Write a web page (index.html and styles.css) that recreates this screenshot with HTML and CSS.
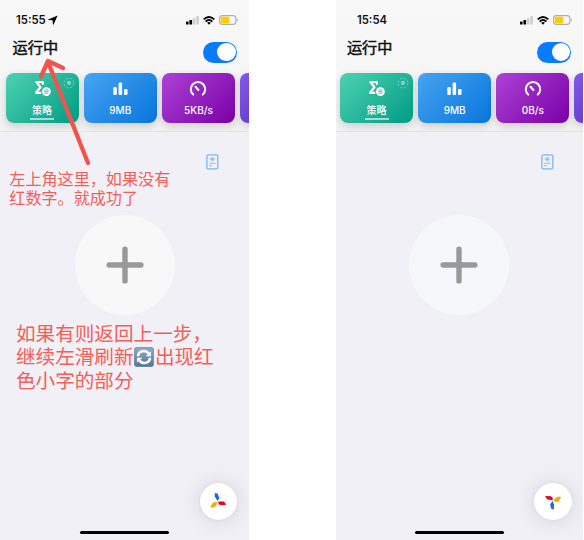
FILE: index.html
```
<!DOCTYPE html>
<html lang="zh-CN">
<head>
<meta charset="utf-8">
<title>运行中</title>
<link rel="stylesheet" href="styles.css">
</head>
<body>
<svg class="defs" width="0" height="0" aria-hidden="true">
  <symbol id="signal" viewBox="0 0 13 9"><rect x="0" y="5.6" width="2.6" height="2.9" rx=".6"/><rect x="3.4" y="4" width="2.7" height="4.5" rx=".6"/><g fill="#cdcdcd"><rect x="7" y="2" width="2.4" height="6.5" rx=".6"/><rect x="10.4" y="0" width="2.5" height="8.5" rx=".6"/></g></symbol>
  <symbol id="wifi" viewBox="0 0 12 9"><g fill="none" stroke="#000" stroke-width="1.8"><path d="M.7 3.4Q6-1.4 11.3 3.4"/><path d="M2.6 5.6Q6 2.4 9.4 5.6"/></g><path d="M4.1 6.8Q6 5.3 7.9 6.8L6 8.8Z"/></symbol>
  <symbol id="battery" viewBox="0 0 19 10"><rect x=".6" y=".6" width="16.2" height="8.8" rx="2.6" fill="none" stroke="#b0b0b0" stroke-width="1.1"/><rect x="1.7" y="1.7" width="8.7" height="6.6" rx="1.3" fill="#fc0"/><path d="M17.7 3.3q1.2.4 1.2 1.7t-1.2 1.7z" fill="#b0b0b0"/></symbol>
  <symbol id="sigma" viewBox="0 0 17 17"><path d="M8.8 3.8V2H2.4L6.4 7.2 2 12.8H6.4" fill="none" stroke="#fff" stroke-width="2.2" stroke-linejoin="round" stroke-linecap="round"/><circle cx="12.4" cy="11.6" r="4.4" fill="#fff"/><path d="M10.3 10h4.2M10.3 11.6h4.2M10.3 13.2h4.2" stroke="#28b798" stroke-width=".8"/></symbol>
  <symbol id="bars" viewBox="0 0 15 14"><g fill="#fff"><rect x=".3" y="5" width="3.5" height="8" rx="1.3"/><rect x="5.6" y=".5" width="3.5" height="12.5" rx="1.3"/><rect x="11" y="7" width="3.5" height="6" rx="1.3"/></g></symbol>
  <symbol id="gauge" viewBox="0 0 18 16"><path d="M4.2 13.6A7.2 7.2 0 1 1 13.8 13.6" fill="none" stroke="#fff" stroke-width="2" stroke-linecap="round"/><path d="M6.5 5.8L9.4 9" stroke="#fff" stroke-width="2.1" stroke-linecap="round"/></symbol>
  <symbol id="target" viewBox="0 0 12 12"><g fill="none" stroke="#fff"><circle cx="6" cy="6" r="4.9" stroke-width=".8" stroke-dasharray="2.4 1.45"/><circle cx="6" cy="6" r="1.2" stroke-width="1.9"/></g></symbol>
  <symbol id="doc" viewBox="0 0 13 16"><g fill="none" stroke="#7ab7f6"><rect x=".9" y=".9" width="10.9" height="14" rx="1.5" stroke-width="1.3"/><path d="M3.6 5.2h5.5M6.3 3v4.3M4.8 3.8l3 2.8M7.8 3.8l-3 2.8" stroke-width=".8"/><path d="M3.2 9.3h6.4M3.2 11.6h3" stroke-width=".9"/></g></symbol>
  <symbol id="plus" viewBox="0 0 38 38"><path d="M3.1 19h31.8M19 3.1v31.8" stroke="#999" stroke-width="5.4" stroke-linecap="round"/></symbol>
  <symbol id="fan" viewBox="0 0 18 18"><path d="M8.4 9.1L5.7 4.2 5.9.9 8.6 1.6 10.4 6.3Z" fill="#136ce8"/><path d="M9.2 9.6L15 9.4 17.4 12.8 12.1 13.3 9.6 12.2Z" fill="#e00828"/><path d="M8.5 9.7L7.2 13.3 5 15.6 1.2 15.2 4 10.6Z" fill="#f3a90e"/></symbol>
  <symbol id="fan-turned" viewBox="0 0 18 18"><path d="M8.8 8.3L3.4 7.5.8 4.2 6.2 4.1 8.6 5.6Z" fill="#e00828"/><path d="M9.4 8.4L11.5 5.9 14.4 4.5 17.1 5 15.2 8.7 12.1 10.4Z" fill="#f3a90e"/><path d="M8.6 8.9L10.1 12.8 9.7 17.8 7 16.6 6.2 12.2Z" fill="#136ce8"/></symbol>
</svg>
<main class="board">
  <section class="phone">
    <div class="screen">
      <header class="top">
        <div class="status">
          <span class="time">15:55</span>
          <svg class="location" viewBox="0 0 10 10"><path d="M9.6.4L.3 4.4q-.4.4.3.6l4 .3.3 4q.2.8.7.2Z"/></svg>
          <div class="system"><svg class="signal"><use href="#signal"/></svg><svg class="wifi"><use href="#wifi"/></svg><svg class="battery"><use href="#battery"/></svg></div>
        </div>
        <div class="heading"><h1>运行中</h1><span class="toggle"></span></div>
        <div class="cards">
          <div class="card green"><svg class="target"><use href="#target"/></svg><svg class="icon"><use href="#sigma"/></svg><span class="label selected">策略</span></div>
          <div class="card blue"><svg class="icon bars"><use href="#bars"/></svg><span class="label">9MB</span></div>
          <div class="card purple"><svg class="icon gauge"><use href="#gauge"/></svg><span class="label">5KB/s</span></div>
          <div class="card violet"></div>
        </div>
      </header>
      <div class="content">
        <svg class="doc"><use href="#doc"/></svg>
        <div class="add"><svg><use href="#plus"/></svg></div>
        <div class="fab"><svg><use href="#fan"/></svg></div>
        <div class="home"></div>
      </div>
      <svg class="arrow" viewBox="0 0 249 180"><path d="M88 163L48 62M41 76.5L48 61L63 68" fill="none" stroke="#f0544f" stroke-width="4.3" stroke-linecap="round" stroke-linejoin="round"/></svg>
      <p class="note first">左上角这里，如果没有<br>红数字。就成功了</p>
      <p class="note second">如果有则返回上一步，<br>继续左滑刷新<svg class="refresh" viewBox="0 0 20 20"><defs><linearGradient id="tile" x2="0" y2="1"><stop stop-color="#91adc3"/><stop offset="1" stop-color="#527696"/></linearGradient></defs><rect x=".3" y=".3" width="19.4" height="19.4" rx="3" fill="url(#tile)" stroke="#557993" stroke-width=".6"/><g fill="none" stroke="#fff" stroke-width="2.5"><path d="M4 9.3C4.2 3.6 11.8 2.3 14.5 6.5"/><path d="M16 10.7C15.8 16.4 8.2 17.7 5.5 13.5"/></g><path d="M17 4.3V9.2H11.6ZM3 15.7V10.8H8.4Z" fill="#fff"/></svg>出现红<br>色小字的部分</p>
    </div>
  </section>
  <section class="phone later">
    <div class="screen">
      <header class="top">
        <div class="status">
          <span class="time">15:54</span>
          <div class="system"><svg class="signal"><use href="#signal"/></svg><svg class="wifi"><use href="#wifi"/></svg><svg class="battery"><use href="#battery"/></svg></div>
        </div>
        <div class="heading"><h1>运行中</h1><span class="toggle"></span></div>
        <div class="cards">
          <div class="card green"><svg class="target"><use href="#target"/></svg><svg class="icon"><use href="#sigma"/></svg><span class="label selected">策略</span></div>
          <div class="card blue"><svg class="icon bars"><use href="#bars"/></svg><span class="label">9MB</span></div>
          <div class="card purple"><svg class="icon gauge"><use href="#gauge"/></svg><span class="label">0B/s</span></div>
          <div class="card violet"></div>
        </div>
      </header>
      <div class="content">
        <svg class="doc"><use href="#doc"/></svg>
        <div class="add"><svg><use href="#plus"/></svg></div>
        <div class="fab"><svg><use href="#fan-turned"/></svg></div>
        <div class="home"></div>
      </div>
    </div>
  </section>
</main>
</body>
</html>
```
FILE: styles.css
```
* { box-sizing: border-box; }
body { margin: 0; background: #fff; color: #111; font-family: Inter, "Noto Sans CJK SC", sans-serif; overflow: hidden; }
.defs { position: absolute; }
svg { display: block; flex: none; }
.board { display: grid; grid-template-columns: 249px 247px; column-gap: 87px; height: 540px; }
.phone { overflow: hidden; background: #f1f0f6; }
.screen { position: relative; display: flex; flex-direction: column; width: 249px; height: 540px; }
.later .screen { margin-left: -1.6px; }
.top { height: 132px; background: linear-gradient(#f8f8f8, #f6f6f6 65%, #f2f2f3); border-bottom: 1px solid #e2e2e7; overflow: hidden; }
.status { display: flex; align-items: center; height: 20px; margin-top: 10px; padding: 0 11.5px 0 16px; }
.time { font-size: 11.3px; font-weight: 600; line-height: 20px; }
.later .time { margin-left: 6.5px; }
.location { width: 10px; height: 10px; margin-left: 2.3px; }
.system { display: flex; align-items: center; margin-left: auto; }
.signal { width: 13px; height: 9px; }
.wifi { width: 12px; height: 9px; margin-left: 4px; }
.battery { width: 19px; height: 10px; margin-left: 3.5px; }
.heading { display: flex; justify-content: space-between; height: 43px; padding: 5px 12px 0 12.5px; }
h1 { margin: 0; font-size: 15.2px; font-weight: 400; line-height: 25px; -webkit-text-stroke: .5px #111; }
.toggle { width: 34px; height: 21px; margin-top: 6.5px; padding: 1.2px; border-radius: 11px; background: #087cff; display: flex; justify-content: flex-end; }
.toggle::after { content: ""; width: 18.4px; height: 18.4px; border-radius: 50%; background: #fff; }
.cards { display: flex; gap: 5px; padding-left: 5.5px; }
.card { position: relative; flex: none; display: flex; flex-direction: column; align-items: center; justify-content: space-between; width: 73.2px; height: 49.5px; padding: 7px 0 3px; border-radius: 8px; box-shadow: 0 3px 9px rgba(0,0,0,.16); color: #fff; }
.green { background: linear-gradient(135deg, #4dd2b1, #019b85); }
.blue { background: linear-gradient(135deg, #46a4f2, #0875dc); }
.purple { background: linear-gradient(135deg, #ad42d6, #7900a5); }
.violet { background: linear-gradient(135deg, #8059eb, #4f24b5); }
.icon { width: 17px; height: 17px; }
.bars { width: 15px; height: 14px; margin-top: 2px; }
.gauge { width: 18px; height: 16px; margin-top: .5px; }
.label { font-size: 10px; font-weight: 500; line-height: 15.5px; height: 16.5px; }
.selected { width: 24px; text-align: center; border-bottom: 1.6px solid rgba(255,255,255,.7); border-bottom-width: 2px; border-bottom-color: rgba(255,255,255,.6); white-space: nowrap; }
.target { position: absolute; top: 3.5px; right: 4px; width: 12px; height: 12px; opacity: .45; }
.content { display: flex; flex: 1; flex-direction: column; background: linear-gradient(#f1f1f4, #f1f0f6 15px); }
.doc { width: 13px; height: 16px; margin: 22px 0 0 206.3px; }
.add { display: grid; place-items: center; width: 100px; height: 100px; margin: 44.5px 0 0 74.8px; border-radius: 50%; background: #f8f8f9; }
.later .add { background: #f6f7fa; }
.add svg { width: 38px; height: 38px; }
.fab { display: grid; place-items: center; width: 37.5px; height: 37.5px; margin: auto 11.8px 11px auto; border-radius: 50%; background: #fff; box-shadow: 0 1px 22px rgba(0,0,20,.13), 0 0 3px rgba(0,0,0,.07); }
.fab svg { width: 18px; height: 18px; }
.home { flex: none; width: 89px; height: 3.4px; margin: 0 0 5.6px 80.2px; border-radius: 2px; background: #000; }
.arrow { position: absolute; left: 0; top: 0; width: 249px; height: 180px; }
.note { position: absolute; margin: 0; color: #f0605a; font-family: "Noto Sans CJK SC", sans-serif; white-space: nowrap; }
.first { left: 9.3px; top: 169px; font-size: 16.1px; line-height: 18.8px; }
.second { left: 16px; top: 321px; font-size: 19.6px; line-height: 23.3px; }
.refresh { display: inline-block; width: 20px; height: 20px; margin: 0 .7px; vertical-align: -3.2px; }
```
